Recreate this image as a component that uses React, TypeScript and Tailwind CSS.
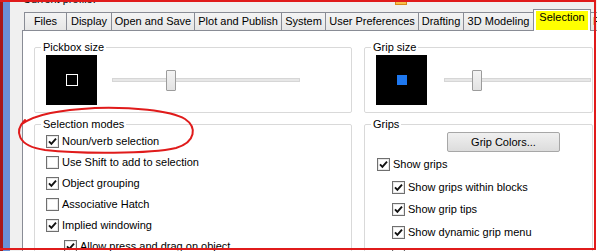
import React from "react";

const tabs = [
  { label: "Files", w: "w-[42px]" },
  { label: "Display", w: "w-[45px]" },
  { label: "Open and Save", w: "w-[83px]" },
  { label: "Plot and Publish", w: "w-[87px]" },
  { label: "System", w: "w-[44px]" },
  { label: "User Preferences", w: "w-[93px]" },
  { label: "Drafting", w: "w-[45px]" },
  { label: "3D Modeling", w: "w-[70px]" },
];

function Check({ on }: { on: boolean }) {
  return (
    <svg width="13" height="13" viewBox="0 0 13 13" className="shrink-0">
      <rect x="0.5" y="0.5" width="12" height="12" fill="#fff" stroke="#6f6f6f" />
      <rect x="1.5" y="1.5" width="10" height="10" fill="none" stroke="#e8e8e8" />
      {on && (
        <path d="M3 6.3 L5.4 8.8 L10 3.6" fill="none" stroke="#111" strokeWidth="1.9" />
      )}
    </svg>
  );
}

function Row({
  on,
  label,
  pad,
  h,
}: {
  on: boolean;
  label?: string;
  pad: string;
  h: string;
}) {
  return (
    <div className={`flex shrink-0 items-center gap-[3px] ${pad} ${h}`}>
      <Check on={on} />
      {label && <span className="whitespace-nowrap leading-[13px]">{label}</span>}
    </div>
  );
}

function Slider({ w, thumb, ml }: { w: string; thumb: string; ml: string }) {
  return (
    <div className={`relative flex h-[21px] items-center ${w} ${ml}`}>
      <div className="h-[4px] w-full border border-[#d6d6d6] bg-[#e7e7e7]" />
      {/* thumb sits over the track */}
      <div
        className={`absolute top-0 h-[21px] w-[10px] rounded-[1px] border border-[#9c9c9c] bg-gradient-to-b from-[#f4f4f4] to-[#e2e2e2] ${thumb}`}
      />
    </div>
  );
}

function Legend({ children }: { children: React.ReactNode }) {
  return <legend className="ml-[6px] px-[2px] leading-[13px]">{children}</legend>;
}

export default function App() {
  return (
    <div className="relative flex h-[251px] w-[597px] overflow-hidden bg-[#f0f0f0] font-['Liberation_Sans',Arial,sans-serif] text-[11px] text-black">
      <div className="w-[3px] shrink-0 bg-[#a81818]" />
      <div className="w-[7px] shrink-0 bg-[#6b91d6]" />

      <div className="flex min-w-0 flex-1 flex-col pl-[12px]">
        {/* dialog header, cut off at the top */}
        <div className="flex h-[12px] shrink-0 overflow-hidden">
          <span className="-mt-[7px] ml-[1px] w-[372px] shrink-0 leading-[13px]">Current profile:</span>
          <div className="h-[5px] w-[12px] border border-[#d98a1a] bg-[#f7c04a]" />
        </div>

        {/* tabs */}
        <div className="flex h-[18px] shrink-0 items-end pl-[2px]">
          {tabs.map((t) => (
            <div
              key={t.label}
              className={`flex h-[18px] shrink-0 items-center justify-center whitespace-nowrap border-l border-t border-[#898c95] bg-gradient-to-b from-[#f4f4f4] to-[#e6e6e6] leading-[13px] ${t.w}`}
            >
              {t.label}
            </div>
          ))}
          <div className="relative z-10 -mb-px h-[22px] w-[58px] shrink-0 border-x border-t border-[#898c95] bg-white px-[2px] pt-px">
            <div className="flex h-[19px] justify-center bg-[#ffff00] leading-[13px]">Selection</div>
          </div>
          <div className="flex h-[18px] w-[40px] shrink-0 items-center border-t border-[#898c95] bg-gradient-to-b from-[#f4f4f4] to-[#e6e6e6] pl-[2px] leading-[13px]">
            P
          </div>
        </div>

        {/* tab page */}
        <div className="flex shrink-0 gap-[12px] border-l border-t border-[#898c95] bg-white pb-[20px] pl-[11px] pt-[10px]">
          <div className="flex w-[318px] shrink-0 flex-col">
            <fieldset className="rounded-[2px] border border-[#d9d9d9]">
              <Legend>Pickbox size</Legend>
              <div className="flex items-center pb-[7px] pl-[11px] pt-px">
                <div className="flex h-[50px] w-[51px] items-center justify-center bg-black">
                  <div className="h-[12px] w-[12px] border-[1.5px] border-white" />
                </div>
                <Slider w="w-[188px]" thumb="left-[54px]" ml="ml-[15px]" />
              </div>
            </fieldset>

            <fieldset className="mt-[5px] rounded-[2px] border border-[#d9d9d9]">
              <Legend>Selection modes</Legend>
              <Row on label="Noun/verb selection" pad="pl-[11px]" h="h-[21px]" />
              <Row on={false} label="Use Shift to add to selection" pad="pl-[11px]" h="h-[21px]" />
              <Row on label="Object grouping" pad="pl-[11px]" h="h-[21px]" />
              <Row on={false} label="Associative Hatch" pad="pl-[11px]" h="h-[21px]" />
              <Row on label="Implied windowing" pad="pl-[11px]" h="h-[21px]" />
              <Row on label="Allow press and drag on object" pad="pl-[29px]" h="h-[21px]" />
            </fieldset>
          </div>

          <div className="flex w-[229px] shrink-0 flex-col">
            <fieldset className="rounded-[2px] border border-[#d9d9d9]">
              <Legend>Grip size</Legend>
              <div className="flex items-center pb-[7px] pl-[11px] pt-px">
                <div className="flex h-[50px] w-[51px] shrink-0 items-center justify-center bg-black">
                  <div className="h-[10px] w-[10px] bg-[#1e78f0]" />
                </div>
                <Slider w="w-[147px]" thumb="left-[28px]" ml="ml-[17px]" />
              </div>
            </fieldset>

            <fieldset className="mt-[5px] rounded-[2px] border border-[#d9d9d9]">
              <Legend>Grips</Legend>
              <button className="ml-[82px] mt-px flex h-[20px] w-[113px] items-center justify-center rounded-[2px] border border-[#a7a7a7] bg-gradient-to-b from-[#f0f0f0] to-[#dcdcdc] leading-[13px]">
                Grip Colors...
              </button>
              <div className="pt-[1.5px]">
                <Row on label="Show grips" pad="pl-[12px]" h="h-[22.5px]" />
                <Row on label="Show grips within blocks" pad="pl-[27px]" h="h-[22.5px]" />
                <Row on label="Show grip tips" pad="pl-[27px]" h="h-[22.5px]" />
                <Row on label="Show dynamic grip menu" pad="pl-[27px]" h="h-[22.5px]" />
                <Row on={false} pad="pl-[27px]" h="h-[22.5px]" />
              </div>
            </fieldset>
          </div>
        </div>
      </div>

      {/* red annotation drawn over the screenshot */}
      <div className="pointer-events-none absolute left-0 top-0 h-[250px] w-[596px] border-y-2 border-r-2 border-[#e01b1b]" />
      <svg
        className="pointer-events-none absolute left-0 top-0"
        width="597"
        height="251"
        viewBox="0 0 597 251"
      >
        <path
          d="M 25 120 C 14 131, 17 146, 45 150 C 80 154, 150 154, 176 148 C 196 142, 197 127, 185 119 C 170 110, 130 107, 95 108 C 60 110, 36 114, 22 124"
          fill="none"
          stroke="#e01b1b"
          strokeWidth="2"
          strokeLinecap="round"
        />
      </svg>
    </div>
  );
}
